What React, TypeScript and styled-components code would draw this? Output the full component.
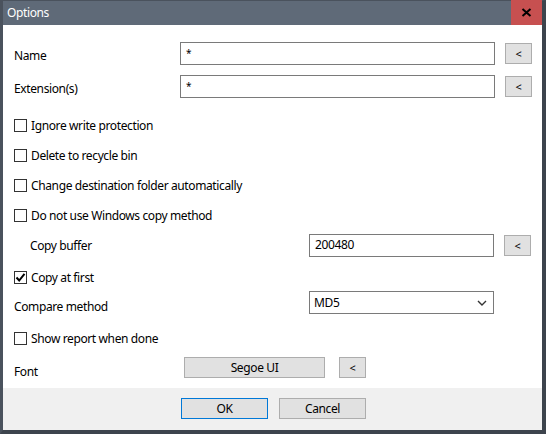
import React from "react";
import styled, { createGlobalStyle } from "styled-components";

const Global = createGlobalStyle`
  html, body { margin: 0; padding: 0; background: #ffffff; }
  body { font-family: "Noto Sans", "Liberation Sans", sans-serif; font-size: 12px; letter-spacing: -0.38px; color: #000; }
  * { box-sizing: border-box; }
`;

const Frame = styled.div`
  width: 546px;
  height: 434px;
  display: flex;
  flex-direction: column;
  background: #5f6a78;
  border-left: 3px solid #4a525d;
  border-right: 4px solid #3d444d;
  border-bottom: 4px solid #3d444d;
  border-top: 1px solid #4a525d;
`;

const TitleBar = styled.div`
  height: 24px;
  display: flex;
  align-items: center;
  justify-content: space-between;
  background: #5f6a78;
`;

const Title = styled.span`
  color: #ffffff;
  font-size: 12px;
  padding-left: 4px;
  padding-bottom: 1px;
`;

const CloseButton = styled.div`
  width: 31px;
  margin-top: -1px;
  height: 25px;
  background: #c75050;
  display: flex;
  align-items: center;
  justify-content: center;
`;

const Client = styled.div`
  flex: 1;
  display: flex;
  flex-direction: column;
  background: #ffffff;
`;

const Body = styled.div`
  flex: 1;
  display: flex;
  flex-direction: column;
  padding: 17px 0 0 11px;
`;

const Row = styled.div<{ $h: number; $mt?: number }>`
  display: flex;
  align-items: center;
  height: ${(p) => p.$h}px;
  margin-top: ${(p) => p.$mt ?? 0}px;
`;

const Label = styled.span<{ $w: number; $indent?: number; $dy?: number }>`
  width: ${(p) => p.$w}px;
  padding-left: ${(p) => p.$indent ?? 0}px;
  padding-top: ${(p) => (p.$dy ?? 0) * 2}px;
  flex-shrink: 0;
  white-space: nowrap;
`;

const TextBox = styled.div<{ $w: number }>`
  width: ${(p) => p.$w}px;
  height: 23px;
  border: 1px solid #7a7a7a;
  background: #fff;
  padding: 2px 0 0 5px;
  line-height: 16px;
  flex-shrink: 0;
`;

const Star = styled.span`
  font-size: 10px;
`;

const SmallButton = styled.div<{ $ml: number }>`
  width: 27px;
  height: 21px;
  margin-left: ${(p) => p.$ml}px;
  border: 1px solid #adadad;
  background: #e1e1e1;
  display: flex;
  align-items: center;
  justify-content: center;
  font-size: 11px;
  flex-shrink: 0;
`;

const PushButton = styled.div<{ $w: number; $default?: boolean }>`
  width: ${(p) => p.$w}px;
  height: 21px;
  border: 1px solid ${(p) => (p.$default ? "#0078d7" : "#adadad")};
  background: #e1e1e1;
  display: flex;
  align-items: center;
  justify-content: center;
  flex-shrink: 0;
`;

const CheckRow = styled.label`
  display: flex;
  align-items: center;
  gap: 4px;
`;

const Box = styled.span`
  width: 13px;
  height: 13px;
  border: 1px solid #333333;
  background: #fff;
  display: flex;
  align-items: center;
  justify-content: center;
`;

const Select = styled.div`
  width: 185px;
  height: 23px;
  border: 1px solid #7a7a7a;
  background: #fff;
  display: flex;
  align-items: center;
  justify-content: space-between;
  padding: 0 6px 0 4px;
  flex-shrink: 0;
`;

const Footer = styled.div`
  height: 42px;
  background: #f0f0f0;
  display: flex;
  justify-content: flex-start;
  gap: 11px;
  padding: 10px 0 0 178px;
`;

const Chevron = () => (
  <svg width="10" height="6" viewBox="0 0 10 6">
    <path d="M1 1 L5 5 L9 1" fill="none" stroke="#333" strokeWidth="1.4" />
  </svg>
);

const Check: React.FC<{ label: string; checked?: boolean }> = ({ label, checked }) => (
  <CheckRow>
    <Box>
      {checked && (
        <svg width="11" height="11" viewBox="0 0 11 11">
          <path d="M1.5 5.5 L4.2 8.5 L9.5 1.8" fill="none" stroke="#000" strokeWidth="2" />
        </svg>
      )}
    </Box>
    <span>{label}</span>
  </CheckRow>
);

export default function App() {
  return (
    <>
      <Global />
      <Frame>
        <TitleBar>
          <Title>Options</Title>
          <CloseButton>
            <svg width="11" height="9" viewBox="0 0 11 9">
              <path d="M1.5 1 L9.5 8 M9.5 1 L1.5 8" stroke="#000" strokeWidth="2" />
            </svg>
          </CloseButton>
        </TitleBar>
        <Client>
          <Body>
            <Row $h={23}>
              <Label $w={166} $dy={1.5}>Name</Label>
              <TextBox $w={315}><Star>*</Star></TextBox>
              <SmallButton $ml={10}>&lt;</SmallButton>
            </Row>
            <Row $h={23} $mt={10}>
              <Label $w={166} $dy={1.5}>Extension(s)</Label>
              <TextBox $w={315}><Star>*</Star></TextBox>
              <SmallButton $ml={10}>&lt;</SmallButton>
            </Row>
            <Row $h={30} $mt={12}>
              <Check label="Ignore write protection" />
            </Row>
            <Row $h={30}>
              <Check label="Delete to recycle bin" />
            </Row>
            <Row $h={30}>
              <Check label="Change destination folder automatically" />
            </Row>
            <Row $h={30}>
              <Check label="Do not use Windows copy method" />
            </Row>
            <Row $h={23} $mt={4}>
              <Label $w={295} $indent={16}>Copy buffer</Label>
              <TextBox $w={185}>200480</TextBox>
              <SmallButton $ml={10}>&lt;</SmallButton>
            </Row>
            <Row $h={23} $mt={9}>
              <Check label="Copy at first" checked />
            </Row>
            <Row $h={23} $mt={2}>
              <Label $w={295} $dy={4}>Compare method</Label>
              <Select>
                <span>MD5</span>
                <Chevron />
              </Select>
            </Row>
            <Row $h={23} $mt={13}>
              <Check label="Show report when done" />
            </Row>
            <Row $h={21} $mt={7}>
              <Label $w={170} $dy={4}>Font</Label>
              <PushButton $w={141}>Segoe UI</PushButton>
              <SmallButton $ml={14}>&lt;</SmallButton>
            </Row>
          </Body>
          <Footer>
            <PushButton $w={87} $default>OK</PushButton>
            <PushButton $w={87}>Cancel</PushButton>
          </Footer>
        </Client>
      </Frame>
    </>
  );
}
